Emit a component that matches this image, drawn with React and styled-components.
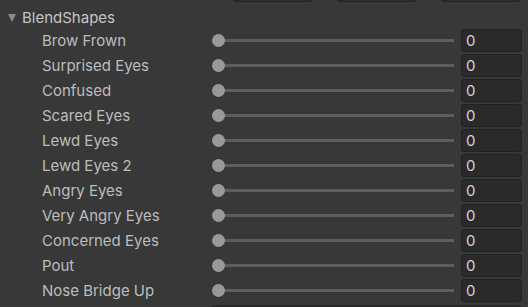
import React from 'react';
import styled, { createGlobalStyle } from 'styled-components';

const GlobalStyle = createGlobalStyle`
  html, body {
    margin: 0;
    padding: 0;
    background: #383838;
    overflow: hidden;
  }
  body {
    font-family: Inter, "Noto Sans", sans-serif;
    font-size: 15px;
    color: #c4c4c4;
  }
`;

const shapes = [
  'Brow Frown',
  'Surprised Eyes',
  'Confused',
  'Scared Eyes',
  'Lewd Eyes',
  'Lewd Eyes 2',
  'Angry Eyes',
  'Very Angry Eyes',
  'Concerned Eyes',
  'Pout',
  'Nose Bridge Up',
];

const Panel = styled.div`
  width: 528px;
  height: 307px;
  display: flex;
  flex-direction: column;
  overflow: hidden;
`;

const Toolbar = styled.div`
  height: 2px;
  display: flex;
  align-items: flex-end;
  gap: 25px;
  padding: 0 6px 0 233px;
  overflow: hidden;
  flex-shrink: 0;
`;

const ToolButton = styled.div`
  flex: 0 0 79px;
  height: 20px;
  box-sizing: border-box;
  background: #2e2e2e;
  border: 1px solid #232323;
  border-radius: 3px;
`;

const Header = styled.div`
  height: 22px;
  margin-top: 4px;
  display: flex;
  align-items: center;
  gap: 6px;
  padding-left: 8px;
  flex-shrink: 0;
`;

const Arrow = styled.span`
  width: 0;
  height: 0;
  border-left: 4.5px solid transparent;
  border-right: 4.5px solid transparent;
  border-top: 8px solid #8a8a8a;
  margin-top: 1px;
`;

const Title = styled.span`
  color: #c4c4c4;
`;

const Row = styled.div`
  height: 25px;
  display: grid;
  grid-template-columns: 170px 249px 61px;
  align-items: center;
  padding-left: 42px;
  flex-shrink: 0;
`;

const Label = styled.span`
  white-space: nowrap;
  color: #bdbdbd;
`;

const Slider = styled.div`
  position: relative;
  height: 13px;
  display: flex;
  align-items: center;
  padding: 0 7px;
`;

const Track = styled.div`
  flex: 1;
  height: 3px;
  background: #5e5e5e;
`;

const Thumb = styled.div`
  position: absolute;
  left: ${p => p.$pos}px;
  top: 0;
  width: 13px;
  height: 13px;
  border-radius: 50%;
  background: #999999;
`;

const NumberField = styled.div`
  height: 23px;
  box-sizing: border-box;
  background: #2a2a2a;
  border: 1px solid #212121;
  border-radius: 3px;
  display: flex;
  align-items: center;
  padding-left: 4px;
  color: #d2d2d2;
`;

const WideField = styled.div`
  grid-column: 2 / 4;
  align-self: start;
  margin-top: 2px;
  height: 22px;
  box-sizing: border-box;
  background: #2e2e2e;
  border: 1px solid #232323;
  border-radius: 3px;
`;

const ShapeRow = ({ name, value }) => (
  <Row>
    <Label>{name}</Label>
    <Slider>
      <Track />
      <Thumb $pos={value * 2.35} />
    </Slider>
    <NumberField>{value}</NumberField>
  </Row>
);

export default function App() {
  return (
    <>
      <GlobalStyle />
      <Panel>
        <Toolbar>
          <ToolButton />
          <ToolButton />
          <ToolButton />
        </Toolbar>
        <Header>
          <Arrow />
          <Title>BlendShapes</Title>
        </Header>
        {shapes.map(name => (
          <ShapeRow key={name} name={name} value={0} />
        ))}
        <Row>
          <span />
          <WideField />
        </Row>
      </Panel>
    </>
  );
}
